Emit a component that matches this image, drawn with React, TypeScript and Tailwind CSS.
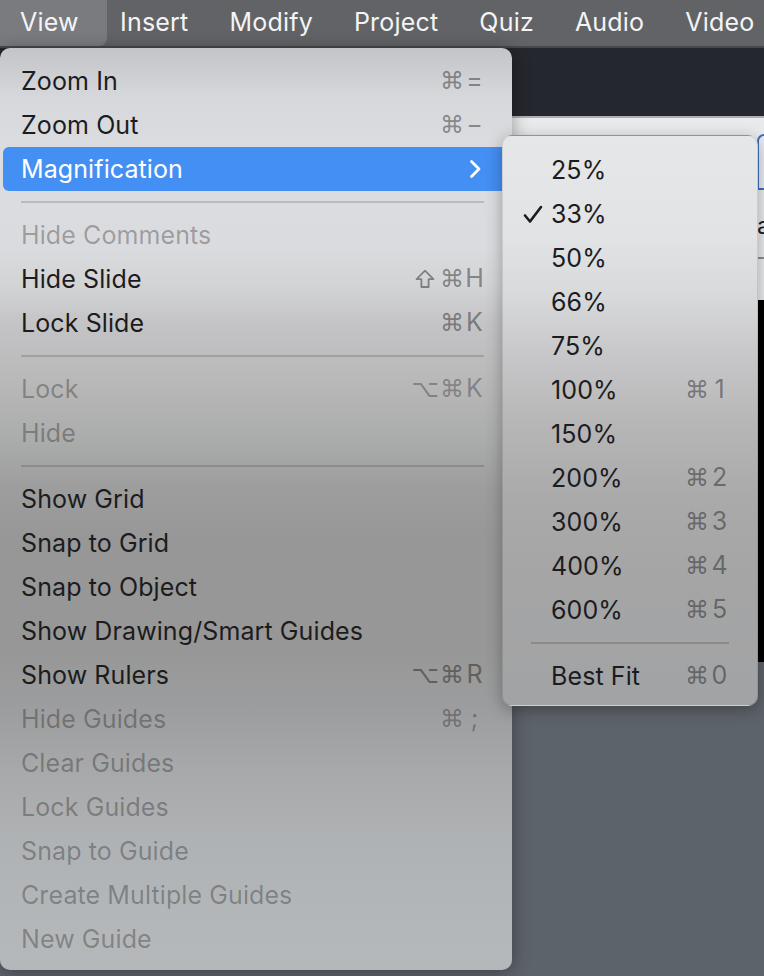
import React from 'react';

type Item = {
  label?: string;
  sep?: boolean;
  disabled?: boolean;
  mods?: string;
  k?: string;
  active?: boolean;
  sub?: boolean;
  check?: boolean;
  shift?: boolean;
};

const mainItems: Item[] = [
  { label: 'Zoom In', mods: '⌘', k: '=' },
  { label: 'Zoom Out', mods: '⌘', k: '−' },
  { label: 'Magnification', active: true, sub: true },
  { sep: true },
  { label: 'Hide Comments', disabled: true },
  { label: 'Hide Slide', mods: '⌘', k: 'H', shift: true },
  { label: 'Lock Slide', mods: '⌘', k: 'K' },
  { sep: true },
  { label: 'Lock', disabled: true, mods: '⌥⌘', k: 'K' },
  { label: 'Hide', disabled: true },
  { sep: true },
  { label: 'Show Grid' },
  { label: 'Snap to Grid' },
  { label: 'Snap to Object' },
  { label: 'Show Drawing/Smart Guides' },
  { label: 'Show Rulers', mods: '⌥⌘', k: 'R' },
  { label: 'Hide Guides', disabled: true, mods: '⌘', k: ';' },
  { label: 'Clear Guides', disabled: true },
  { label: 'Lock Guides', disabled: true },
  { label: 'Snap to Guide', disabled: true },
  { label: 'Create Multiple Guides', disabled: true },
  { label: 'New Guide', disabled: true },
];

const subItems: Item[] = [
  { label: '25%' },
  { label: '33%', check: true },
  { label: '50%' },
  { label: '66%' },
  { label: '75%' },
  { label: '100%', mods: '⌘', k: '1' },
  { label: '150%' },
  { label: '200%', mods: '⌘', k: '2' },
  { label: '300%', mods: '⌘', k: '3' },
  { label: '400%', mods: '⌘', k: '4' },
  { label: '600%', mods: '⌘', k: '5' },
  { sep: true },
  { label: 'Best Fit', mods: '⌘', k: '0' },
];

const FONT = "font-['Inter','Liberation_Sans',sans-serif]";

function Shortcut({ mods, k, dim, shift }: { mods?: string; k?: string; dim?: boolean; shift?: boolean }) {
  if (!mods) return null;
  return (
    <div className={`ml-auto flex items-center ${dim ? 'text-black/30' : 'text-black/40'}`}>
      {shift && (
        <svg className="mr-[5px]" width="20" height="20" viewBox="0 0 20 20" fill="none">
          <path
            d="M10 1.6 L18.4 10.2 H13.6 V18 H6.4 V10.2 H1.6 Z"
            stroke="currentColor"
            strokeWidth="1.8"
            strokeLinejoin="round"
          />
        </svg>
      )}
      <span className="font-['DejaVu_Sans',sans-serif] text-[24px] tracking-[1px]">{mods}</span>
      <span className="w-[19px] text-center text-[25px]">{k}</span>
    </div>
  );
}

function MainRow({ it }: { it: Item }) {
  if (it.sep) {
    return (
      <div className="h-[22px] flex items-center pl-[18px] pr-[25px]">
        <div className="h-[2px] w-full bg-black/15" />
      </div>
    );
  }
  const color = it.active ? 'text-white' : it.disabled ? 'text-black/30' : 'text-[#1c1c1e]';
  return (
    <div
      className={`h-[44px] flex items-center pl-[18px] pr-[25px] rounded-[6px] ${
        it.active ? 'bg-[#448ff4]' : ''
      } ${color}`}
    >
      <span className="text-[25px] leading-none tracking-[0.1px]">{it.label}</span>
      <Shortcut mods={it.mods} k={it.k} dim={it.disabled} shift={it.shift} />
      {it.sub && (
        <svg className="ml-auto mr-[2px]" width="13" height="20" viewBox="0 0 13 20" fill="none">
          <path d="M2.5 2.5 L10 10 L2.5 17.5" stroke="white" strokeWidth="2.8" strokeLinecap="round" strokeLinejoin="round" />
        </svg>
      )}
    </div>
  );
}

function SubRow({ it }: { it: Item }) {
  if (it.sep) {
    return (
      <div className="h-[22px] flex items-center pl-[25px] pr-[25px]">
        <div className="h-[2px] w-full bg-black/15" />
      </div>
    );
  }
  return (
    <div className="h-[44px] flex items-center pr-[25px] text-[#1c1c1e]">
      <div className="w-[45px] flex items-center pl-[17px]">
        {it.check && (
          <svg width="20" height="19" viewBox="0 0 20 19" fill="none">
            <path d="M2 10.5 L7 16.5 L18 2" stroke="#1c1c1e" strokeWidth="2.6" strokeLinecap="round" strokeLinejoin="round" />
          </svg>
        )}
      </div>
      <span className="text-[25px] leading-none tracking-[0.1px]">{it.label}</span>
      <Shortcut mods={it.mods} k={it.k} />
    </div>
  );
}

export default function App() {
  return (
    <div className={`relative w-[764px] h-[976px] overflow-hidden bg-[#5d636a] ${FONT}`}>
      {/* menu bar */}
      <div className="h-[46px] flex items-stretch bg-[#626367] text-[#f4f4f5] text-[25px] tracking-[0.2px]">
        <div className="w-[107px] pl-[20px] flex items-center bg-[#7a7b7f] rounded-br-[8px]">View</div>
        <div className="flex items-center gap-[41px] pl-[13px]">
          <span>Insert</span>
          <span>Modify</span>
          <span>Project</span>
          <span>Quiz</span>
          <span>Audio</span>
          <span>Video</span>
        </div>
      </div>
      <div className="h-[2px] bg-[#47484b]" />

      {/* background app content */}
      <div className="flex flex-col">
        <div className="h-[68px] bg-[#25272e]" />
        <div className="relative h-[184px] bg-[#e9eaec] border-t-2 border-[#aeafb1] overflow-hidden">
          <div className="absolute left-[757px] top-[16px] w-[30px] h-[56px] border-2 border-r-0 border-[#3e6ec2] rounded-tl-[7px]" />
          <span className="absolute left-[757px] top-[96px] text-[24px] leading-none text-[#1c1c1e]">a</span>
          <div className="absolute left-[757px] top-[139px] w-[10px] h-[2px] bg-[#8d8e90]" />
        </div>
        <div className="h-[362px] bg-black" />
      </div>

      {/* main View menu */}
      <div className="absolute left-0 top-[48px] w-[512px] h-[922px] rounded-[10px] px-[3px] pt-[11px] pb-[9px] shadow-[0_2px_18px_rgba(0,0,0,0.35)] bg-[linear-gradient(180deg,#c2c4c8_0px,#d7d8db_50px,#dcdde0_110px,#dadbde_200px,#d2d3d5_240px,#c4c4c6_275px,#b9b9ba_330px,#abacac_390px,#9d9d9e_440px,#979797_490px,#979797_600px,#9c9d9e_660px,#a7a8aa_720px,#afb2b4_790px,#b4b7ba_880px,#b5b8bb_922px)]">
        {mainItems.map((it, i) => (
          <MainRow key={i} it={it} />
        ))}
      </div>

      {/* Magnification submenu */}
      <div className="absolute left-[502px] top-[135px] w-[256px] h-[571px] rounded-[10px] px-[3px] pt-[12px] pb-[9px] border border-black/10 shadow-[0_4px_16px_rgba(0,0,0,0.3)] bg-[linear-gradient(180deg,#e6e7e9_0px,#e2e3e5_100px,#d8d9db_160px,#c7c7c9_220px,#b6b6b7_290px,#aaaaab_360px,#a5a5a6_440px,#a2a3a4_571px)]">
        {subItems.map((it, i) => (
          <SubRow key={i} it={it} />
        ))}
      </div>
    </div>
  );
}
